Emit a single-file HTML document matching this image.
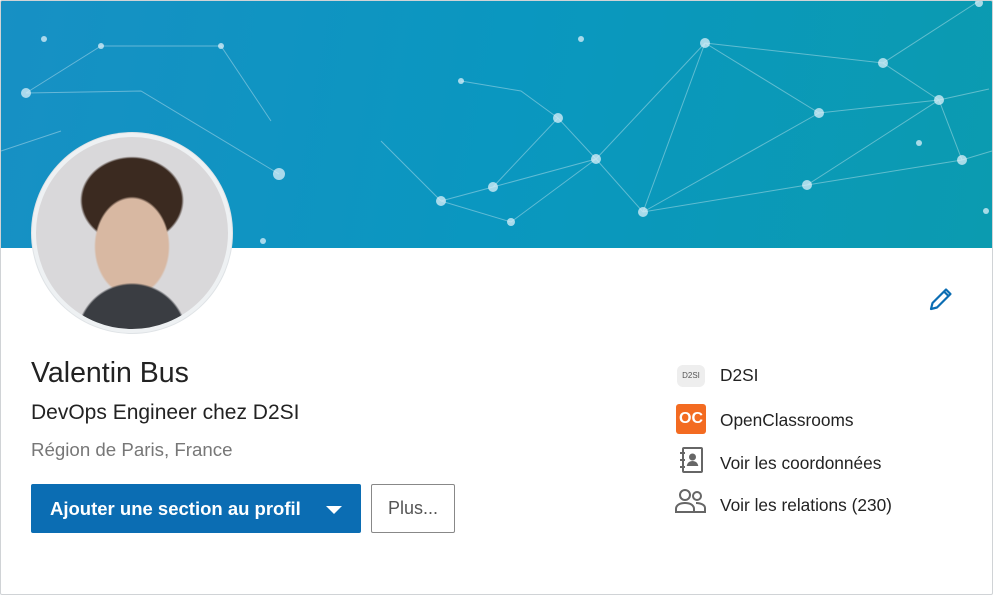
<!DOCTYPE html>
<html><head><style>
body{margin:0;width:993px;height:595px;overflow:hidden;background:#fff;font-family:"Liberation Sans",sans-serif;}
.card{position:absolute;left:0;top:0;width:991px;height:593px;border:1px solid #d0d3d6;border-radius:2px;overflow:hidden;background:#fff}
.banner{position:absolute;left:0;top:0;width:991px;height:247px;background:linear-gradient(100deg,#1790c4 0%,#0a97c0 50%,#0b9bb0 100%)}
.av{position:absolute;left:31px;top:132px;width:192px;height:192px;border-radius:50%;border:4px solid #eef1f3;box-shadow:0 0 0 1px #dfe3e6;background:radial-gradient(circle at 50% 105%,#3a3d42 0 24%,transparent 25%),radial-gradient(ellipse 38px 50px at 50% 57%,#d8b8a2 0 95%,transparent 100%),radial-gradient(ellipse 52px 44px at 50% 33%,#3b2a20 0 95%,transparent 100%),#d9d8da;overflow:hidden}
.t{position:absolute;color:#222;white-space:nowrap}
.btn{position:absolute;left:30px;top:483px;width:330px;height:49px;background:#0b6db3;border-radius:2px;color:#fff;font-weight:bold;font-size:18.5px;line-height:49px;padding-left:19px;box-sizing:border-box}
.btn2{position:absolute;left:370px;top:483px;width:84px;height:49px;border:1px solid #888;border-radius:2px;box-sizing:border-box;color:#555;font-size:18px;line-height:47px;text-align:center}
</style></head><body><div class="card">
<div class="banner"><svg width="991" height="247" style="position:absolute;left:0;top:0">
<g stroke="rgba(255,255,255,0.35)" stroke-width="1" fill="none">
<path d="M25 92 L100 45 L220 45 L270 120 M25 92 L140 90 L278 173 M0 150 L60 130 M440 200 L492 186 L557 117 L595 158 L642 211 L806 184 L938 99 L988 88 M492 186 L595 158 L704 42 L818 112 L938 99 M704 42 L882 62 L978 0 M642 211 L818 112 M938 99 L961 159 L991 150 M440 200 L510 221 L595 158 M460 80 L520 90 L557 117 M882 62 L938 99 M806 184 L961 159 M380 140 L440 200 M704 42 L642 211"/>
</g><g fill="rgba(220,240,250,0.75)">
<circle cx="25" cy="92" r="5"/><circle cx="100" cy="45" r="3"/><circle cx="220" cy="45" r="3"/><circle cx="278" cy="173" r="6"/><circle cx="492" cy="186" r="5"/><circle cx="557" cy="117" r="5"/><circle cx="595" cy="158" r="5"/><circle cx="642" cy="211" r="5"/><circle cx="704" cy="42" r="5"/><circle cx="818" cy="112" r="5"/><circle cx="882" cy="62" r="5"/><circle cx="938" cy="99" r="5"/><circle cx="806" cy="184" r="5"/><circle cx="961" cy="159" r="5"/><circle cx="440" cy="200" r="5"/><circle cx="510" cy="221" r="4"/><circle cx="978" cy="2" r="4"/><circle cx="43" cy="38" r="3"/><circle cx="460" cy="80" r="3"/><circle cx="580" cy="38" r="3"/><circle cx="918" cy="142" r="3"/><circle cx="985" cy="210" r="3"/><circle cx="262" cy="240" r="3"/></g></svg></div>
<div class="av"></div>
<svg style="position:absolute;left:926px;top:284px" width="28" height="28" viewBox="0 0 28 28"><path d="M4 24 L5.5 18 L19 4.5 L23.5 9 L10 22.5 Z M17 6.5 L21.5 11" stroke="#0b6db3" stroke-width="2.2" fill="none" stroke-linejoin="round"/></svg>
<div class="t" style="left:30px;top:356px;font-size:28.5px;">Valentin Bus</div>
<div class="t" style="left:30px;top:400px;font-size:21px;">DevOps Engineer chez D2SI</div>
<div class="t" style="left:30px;top:438px;font-size:18.7px;color:#777">Région de Paris, France</div>
<div class="btn">Ajouter une section au profil<span style="position:absolute;left:295px;top:22px;border:8px solid transparent;border-top:8px solid #fff;border-bottom:0"></span></div>
<div class="btn2">Plus...</div>
<div style="position:absolute;left:676px;top:364px;width:28px;height:22px;background:#eee;border-radius:6px;font-size:8px;color:#555;text-align:center;line-height:22px">D2SI</div>
<div style="position:absolute;left:675px;top:403px;width:30px;height:30px;background:#f36b21;border-radius:3px;color:#fff;font-weight:bold;font-size:16px;text-align:center;line-height:29px">OC</div>
<svg style="position:absolute;left:676px;top:445px" width="28" height="28" viewBox="0 0 28 28" fill="none" stroke="#666" stroke-width="2"><rect x="6" y="2" width="19" height="24" rx="1"/><path d="M3 7h5M3 14h5M3 21h5"/><circle cx="15.5" cy="11" r="2.5" fill="#666"/><path d="M11 19c1-4 8-4 9 0z" fill="#666"/></svg>
<svg style="position:absolute;left:674px;top:486px" width="32" height="28" viewBox="0 0 32 28" fill="none" stroke="#666" stroke-width="2"><circle cx="10" cy="8" r="5"/><path d="M1 25v-3c0-4 4-6 9-6s9 2 9 6v3z"/><circle cx="22" cy="9" r="4"/><path d="M21 16c5 0 9 2 9 5v4h-11"/></svg>
<div class="t" style="left:719px;top:364px;font-size:17.3px;">D2SI</div>
<div class="t" style="left:719px;top:409px;font-size:17.3px;">OpenClassrooms</div>
<div class="t" style="left:719px;top:452px;font-size:17.3px;">Voir les coordonnées</div>
<div class="t" style="left:719px;top:494px;font-size:17.3px;">Voir les relations (230)</div>
</div></body></html>
